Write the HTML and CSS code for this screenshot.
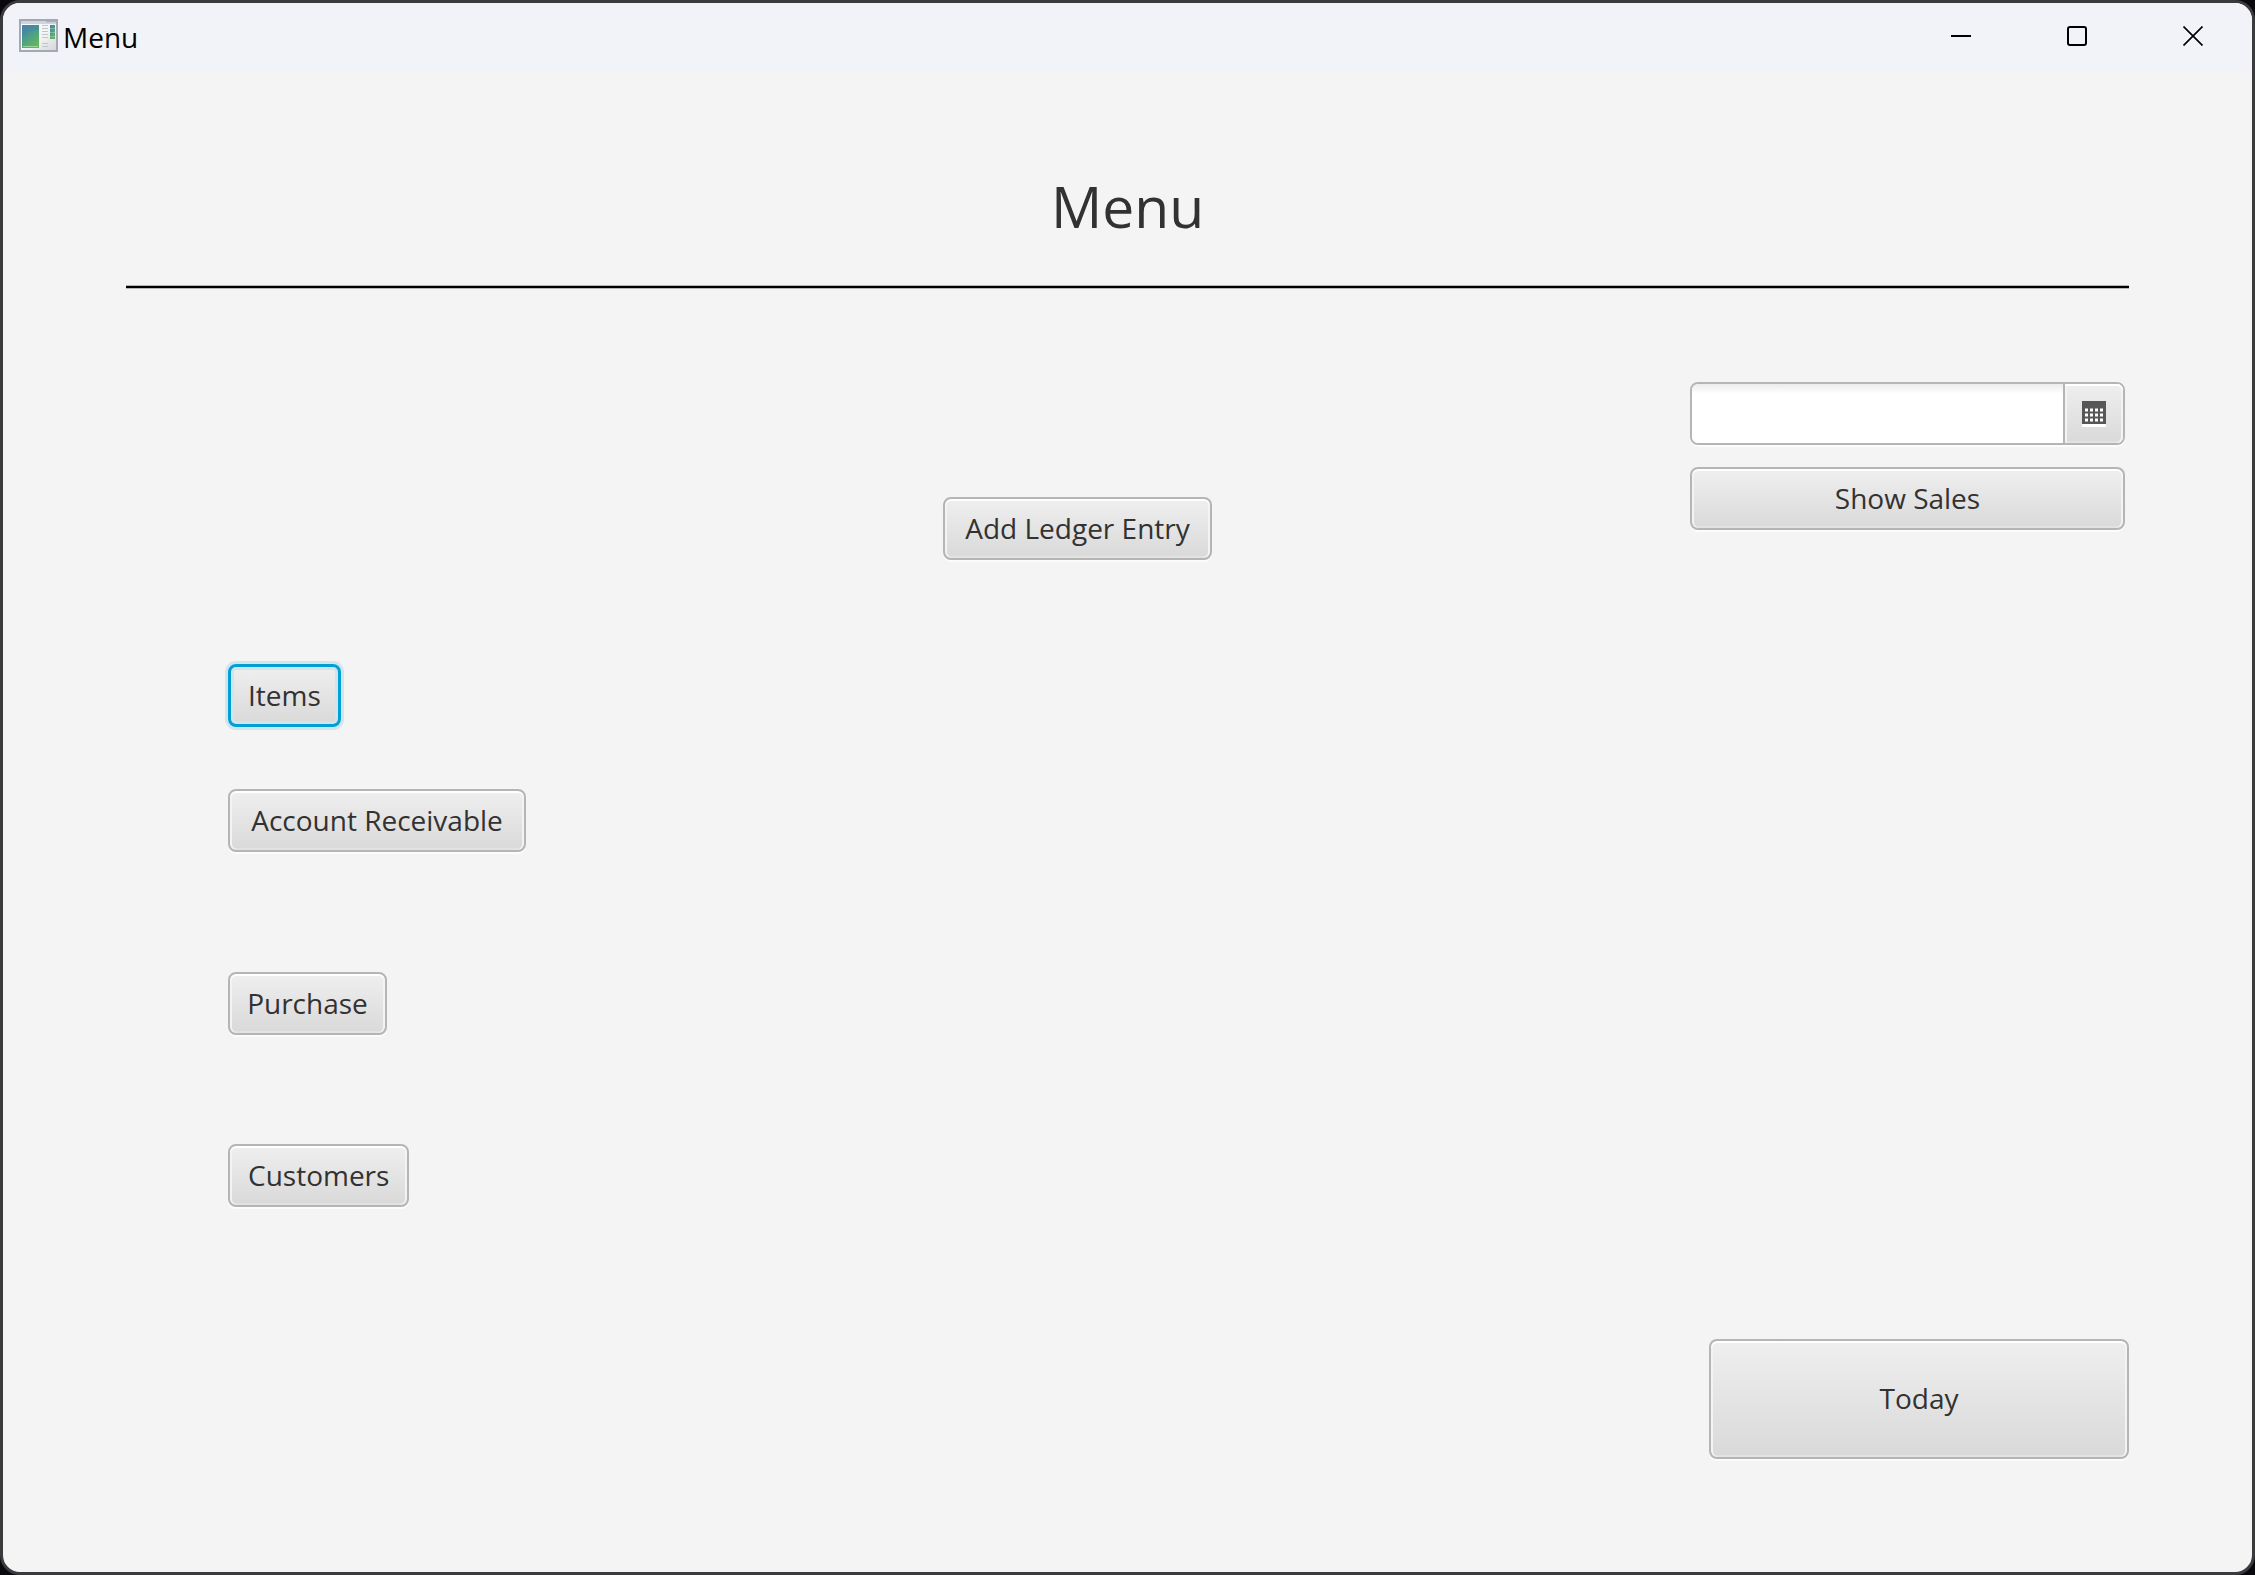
FILE: index.html
```html
<!DOCTYPE html>
<html lang="en">
<head>
<meta charset="utf-8">
<title>Menu</title>
<link rel="stylesheet" href="styles.css">
</head>
<body>
<div class="window">
  <header class="titlebar">
    <svg class="app-icon" width="40" height="34" viewBox="0 0 40 34" aria-hidden="true">
      <defs>
        <linearGradient id="frame" x1="0" y1="0" x2="1" y2="1"><stop offset="0" stop-color="#ffffff"/><stop offset=".6" stop-color="#f1f2f2"/><stop offset="1" stop-color="#d3d5d6"/></linearGradient>
        <linearGradient id="pane" x1="0" y1="0" x2=".6" y2="1"><stop offset="0" stop-color="#4a80ac"/><stop offset=".5" stop-color="#4a9c8c"/><stop offset="1" stop-color="#62b560"/></linearGradient>
      </defs>
      <rect x="1" y="1" width="37" height="31" fill="url(#frame)" stroke="#a3a9b2" stroke-width="2"/>
      <path d="M2 3.500h35" stroke="#ccd4dd" stroke-width="3"/>
      <path d="M27 2.500h10" stroke="#a8b0ba" stroke-width="1.500"/>
      <rect x="3" y="6" width="17" height="23" fill="url(#pane)"/>
      <path d="M3 19C8 13 14 11 20 11V6H3z" fill="#4782a9" opacity=".45"/>
      <path d="M4 27.500h15" stroke="#9bd39a"/>
      <path d="M23 6.500h6M23 9.500h6M23 12.500h6M23 15.500h6M23 18.500h6M23 24.500h6M23 27.500h6" stroke="#c3c6c9"/>
      <rect x="31" y="6" width="5" height="14" fill="url(#pane)"/>
      <path d="M31 9.500h5M31 13.500h5M31 17.500h5" stroke="#a5cdb9" stroke-width=".6"/>
    </svg>
    <span class="window-title">Menu</span>
    <div class="window-controls">
      <button class="window-control" aria-label="Minimize"><svg width="20" height="20" viewBox="0 0 20 20"><path d="M0 10h20" stroke="#000" stroke-width="2"/></svg></button>
      <button class="window-control" aria-label="Maximize"><svg width="20" height="20" viewBox="0 0 20 20"><rect x="1" y="1" width="18" height="18" rx="2" fill="none" stroke="#000" stroke-width="2"/></svg></button>
      <button class="window-control" aria-label="Close"><svg width="20" height="20" viewBox="0 0 20 20"><path d="M.5.5l19 19M19.500.5l-19 19" stroke="#000" stroke-width="1.700"/></svg></button>
    </div>
  </header>
  <main class="content">
    <h1 class="heading">Menu</h1>
    <hr class="rule">
    <div class="columns">
      <nav class="sections">
        <button class="button focused">Items</button>
        <button class="button receivable">Account Receivable</button>
        <button class="button purchase">Purchase</button>
        <button class="button customers">Customers</button>
      </nav>
      <div class="ledger">
        <button class="button add-entry">Add Ledger Entry</button>
      </div>
      <div class="sales">
        <div class="date-picker">
          <input class="date-input" type="text" aria-label="Sales date">
          <button class="date-button" aria-label="Open calendar">
            <svg width="24" height="26" viewBox="0 0 24 26">
              <path d="M0 23h24v3H0z" fill="#fff"/>
              <path d="M0 0h24v23H0z" fill="#575757"/>
              <path d="M3 9h18M3 14h18M3 19h18" stroke="#fff" stroke-width="3" stroke-dasharray="3 2"/>
            </svg>
          </button>
        </div>
        <button class="button show-sales">Show Sales</button>
        <button class="button today">Today</button>
      </div>
    </div>
  </main>
</div>
</body>
</html>
```
FILE: styles.css
```css
* {
  box-sizing: border-box;
}

body {
  margin: 0;
  background: #09090d;
  color: #323232;
  font-family: "Open Sans", "Noto Sans", sans-serif;
  font-size: 28px;
}

button,
input {
  font: inherit;
  color: inherit;
}

.window {
  display: flex;
  flex-direction: column;
  min-height: 100vh;
  border: 3px solid #3b3a3d;
  border-radius: 20px;
  background: #f4f4f4;
  overflow: hidden;
}

.titlebar {
  display: flex;
  align-items: stretch;
  height: 69px;
  padding-left: 16px;
  background: #f1f3f8;
  color: #000;
}

.app-icon {
  margin-top: 16px;
}

.window-title {
  margin-left: 4px;
  line-height: 68px;
}

.window-controls {
  display: flex;
  margin-left: auto;
  padding-right: 1px;
}

.window-control {
  display: flex;
  align-items: center;
  justify-content: center;
  width: 116px;
  height: 66px;
  padding: 0;
  border: 0;
  background: none;
}

.content {
  display: flex;
  flex: 1;
  flex-direction: column;
  padding: 90px 123px 113px;
}

.heading {
  margin: 0;
  font-size: 57px;
  font-weight: 400;
  line-height: 88px;
  text-align: center;
}

.rule {
  width: 100%;
  height: 4px;
  margin: 35px 0 0;
  border: solid #b5b5b5;
  border-width: 1px 0;
  background: #000;
}

.columns {
  display: grid;
  flex: 1;
  grid-template-columns: 817fr 747fr 439px;
}

.sections {
  display: flex;
  flex-direction: column;
  align-items: flex-start;
  padding: 375px 0 0 102px;
}

.ledger {
  padding-top: 208px;
}

.sales {
  display: flex;
  flex-direction: column;
  padding-top: 93px;
}

.button {
  height: 63px;
  padding: 0 18px 2px;
  border: 2px solid #b5b5b5;
  border-radius: 8px;
  background: linear-gradient(#efefef, #d9d9d9);
  box-shadow: inset 0 2px #fff, inset 2px 0 #f3f3f3, inset -2px 0 #f3f3f3, inset 0 -2px #e2e2e2, 0 2px #fcfcfc;
  white-space: nowrap;
}

.focused {
  border: 3px solid #039ed3;
  padding: 0 17px 2px;
  outline: none;
  box-shadow: inset 0 0 0 3px #d0e5eb, 0 0 0 3px #d0e5ed;
}

.receivable {
  min-width: 298px;
  margin-top: 62px;
}

.purchase {
  width: 159px;
  padding-inline: 0;
  margin-top: 120px;
}

.customers {
  margin-top: 109px;
}

.add-entry {
  min-width: 269px;
}

.date-picker {
  display: flex;
  width: 435px;
  height: 63px;
  border: 2px solid #b5b5b5;
  border-radius: 8px;
  background: #fff;
  box-shadow: 0 2px #fcfcfc;
}

.date-input {
  flex: 1;
  min-width: 0;
  padding: 0 18px;
  border: 0;
  border-radius: 6px 0 0 6px;
  background: linear-gradient(#ececec, #fff 10px);
  outline: none;
}

.date-button {
  display: flex;
  align-items: center;
  justify-content: center;
  width: 60px;
  padding: 0;
  border: 0;
  border-left: 2px solid #b5b5b5;
  border-radius: 0 6px 6px 0;
  background: linear-gradient(#efefef, #d9d9d9);
  box-shadow: inset 0 2px #fff, inset 2px 0 #f3f3f3, inset -2px 0 #f3f3f3, inset 0 -2px #e2e2e2;
}

.show-sales {
  width: 435px;
  margin-top: 22px;
}

.today {
  align-self: flex-end;
  width: 420px;
  height: 120px;
  margin-top: auto;
}
```
